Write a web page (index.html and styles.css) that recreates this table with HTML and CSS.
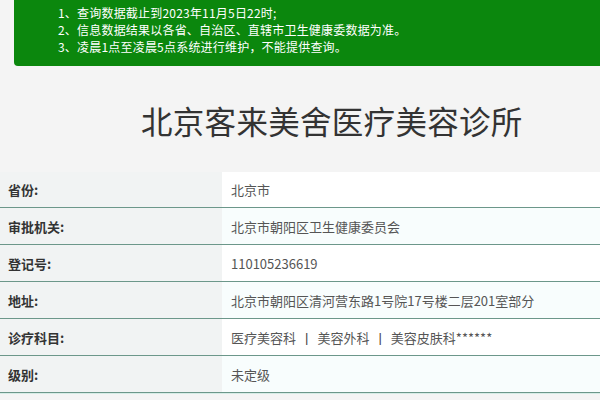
FILE: index.html
```html
<!DOCTYPE html>
<html lang="zh">
<head>
<meta charset="utf-8">
<link rel="stylesheet" href="styles.css">
</head>
<body>
<div class="page">
  <div class="notice">
    <p>1、查询数据截止到2023年11月5日22时;</p>
    <p>2、信息数据结果以各省、自治区、直辖市卫生健康委数据为准。</p>
    <p>3、凌晨1点至凌晨5点系统进行维护，不能提供查询。</p>
  </div>
  <h1 class="title">北京客来美舍医疗美容诊所</h1>
  <div class="table">
    <div class="row"><div class="label">省份:</div><div class="value">北京市</div></div>
    <div class="row alt"><div class="label">审批机关:</div><div class="value">北京市朝阳区卫生健康委员会</div></div>
    <div class="row"><div class="label">登记号:</div><div class="value">110105236619</div></div>
    <div class="row alt"><div class="label">地址:</div><div class="value">北京市朝阳区清河营东路1号院17号楼二层201室部分</div></div>
    <div class="row"><div class="label">诊疗科目:</div><div class="value">医疗美容科<span class="sep">|</span>美容外科<span class="sep">|</span>美容皮肤科******</div></div>
    <div class="row alt"><div class="label">级别:</div><div class="value">未定级</div></div>
  </div>
</div>
</body>
</html>
```

FILE: styles.css
```css
* { box-sizing: border-box; }
html, body { margin: 0; padding: 0; }
body {
  width: 600px;
  height: 400px;
  overflow: hidden;
  background: #f4f4f4;
  font-family: "Noto Sans CJK SC", "Noto Sans", sans-serif;
  color: #333;
}
.page { display: flex; flex-direction: column; }
.notice {
  margin-left: 14px;
  height: 66px;
  background: #0b870d;
  border-bottom-left-radius: 4px;
  padding: 4px 0 0 44px;
  color: #fff;
  font-size: 12px;
  line-height: 17px;
}
.notice p { margin: 0; height: 17px; letter-spacing: 0.2px; }
.title {
  margin: 0;
  padding: 34px 0 0 141px;
  height: 106px;
  font-size: 31.5px;
  font-weight: 400;
  color: #333;
  line-height: 40px;
  letter-spacing: 0.3px;
}
.table { display: flex; flex-direction: column; }
.row {
  display: grid;
  grid-template-columns: 222px 1fr;
  height: 37px;
  border-bottom: 1px solid #6c978a;
  box-shadow: 0 1px 0 #d6ece6;
}
.row:first-child { height: 36px; }
.label {
  background: #f1f3f3;
  padding-left: 8px;
  display: flex;
  align-items: center;
  font-size: 13px;
  font-weight: 700;
  color: #333;
}
.value {
  background: #fff;
  padding-left: 9px;
  display: flex;
  align-items: center;
  font-size: 13px;
  color: #555;
}
.sep {
  margin: 0 9px;
  color: #444;
  font-family: "Liberation Sans", sans-serif;
}
.alt .value { background: #f8fdfd; }
```
